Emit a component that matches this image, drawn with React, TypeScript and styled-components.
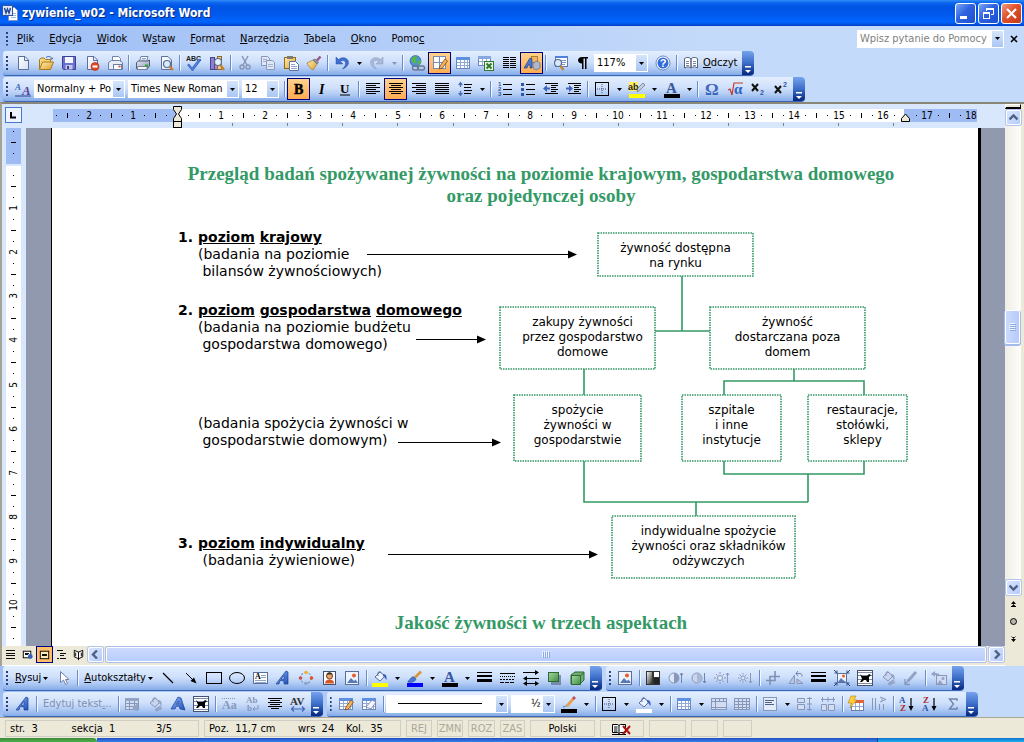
import React, { ReactNode } from "react";
import styled, { createGlobalStyle, css } from "styled-components";

const UI = `"DejaVu Sans Condensed", "DejaVu Sans", sans-serif`;
const GREEN = "#339966";

const Global = createGlobalStyle`
  * { box-sizing: border-box; }
  html, body { margin: 0; padding: 0; height: 100%; }
  body { font-family: ${UI}; font-size: 11px; line-height: 14px; color: #000; background: #ece9d8; overflow: hidden; }
  button, select, input { font: inherit; color: inherit; margin: 0; padding: 0; border: 0; border-radius: 0; background: none; }
  svg { display: block; flex: none; }
`;

/* ---------- icons ---------- */

const ln = (d: string, stroke = "#000", w = 1, extra: object = {}) => (
  <path d={d} fill="none" stroke={stroke} strokeWidth={w} {...extra} />
);

const pageShape = (
  <path d="M3.5 1.5h6.5l3.5 3.5v9.5h-10z" fill="url(#paper)" stroke="#5b6f9c" />
);
const tableShape = (
  <>
    <rect x="1.5" y="2.5" width="13" height="11" fill="#fff" stroke="#6c86bd" />
    <rect x="1" y="2" width="14" height="3" fill="#5f8fe0" />
    {ln("M2 7.5h12M2 10.5h12M5.5 5v8M9.5 5v8M12.5 5v8", "#92aad6")}
  </>
);
const greyTable = (
  <>
    <rect x="1.5" y="2.5" width="13" height="11" fill="#d2ddf2" stroke="#8797ba" />
    <rect x="1" y="2" width="14" height="3" fill="#93a3c5" />
    {ln("M2 7.5h12M2 10.5h12M5.5 5v8M10.5 5v8", "#8797ba")}
  </>
);
const pencil = <path d="M7 14l1-3 5-7 2.5 2-5 7z" fill="#f3b45a" stroke="#7a4a1a" strokeWidth=".8" />;
const lens = (
  <>
    <circle cx="9" cy="9" r="3.5" fill="#d6ecfb" stroke="#5a6c90" strokeWidth="1.2" />
    {ln("M11.5 11.5l3.5 3.5", "#c9802a", 2.2)}
  </>
);
const bucket = (grey: boolean) => (
  <>
    <path d="M3 7l5-5 5 4-5 5z" fill={grey ? "#c9d5ec" : "#eef4ff"} stroke={grey ? "#8797ba" : "#5a6f9f"} />
    <path d="M11 4c3 0 4 2 3.5 6-1.5-2-2-3-3.5-4z" fill={grey ? "#93a3c5" : "#3b62b5"} />
    {ln("M6 6c-1-4 2-6 3-3", grey ? "#8797ba" : "#5a6f9f")}
  </>
);
const picture = (
  <>
    <rect x="1.5" y="1.5" width="13" height="13" fill="#eef4fd" stroke="#5b6f9c" />
    <circle cx="10" cy="5.5" r="2" fill="#e8602c" />
    <path d="M3 13l4-5 3 3 1.5-1.5L14 13z" fill="#5578b8" />
  </>
);
const wordArt = (
  <path d="M1 14L11 1l2 1v12h-4v-3l-4-.5L4 14zM6 9l3 .3V5.500z" fill="url(#blueA)" stroke="#1d4196" strokeWidth=".7" fillRule="evenodd" />
);
const dogWrap = (
  <>
    <rect x=".5" y=".5" width="15" height="15" fill="#fff" stroke="#44516f" />
    {ln("M1 2.5h14M1 5.5h14M1 9.5h14M1 13.5h14", "#7f8aa5")}
    <path d="M3 4l2 2h5l2-2 2 1-2 2v5h-2l-1-2H7l-2 2H3l2-3z" fill="#000" />
  </>
);
const bars = (d: string) => ln(d, "#000", 1, { shapeRendering: "crispEdges" });
const underbar = (fill: string) => <rect x="0" y="13" width="16" height="4" fill={fill} />;
const letter = (t: string, x: number, y: number, size: number, fill: string, more: object = {}) => (
  <text x={x} y={y} fontSize={size} fill={fill} fontFamily='"Liberation Serif", serif' fontWeight="bold" {...more}>{t}</text>
);

const ICONS: Record<string, ReactNode> = {
  word: (
    <>
      <path d="M6.5 2.5h6l3 3v10h-9z" fill="#fff" stroke="#7d94c6" />
      {ln("M9 8.5h5M9 10.5h5M9 12.5h5", "#9fb2d8")}
      <rect x=".5" y=".5" width="10" height="10" fill="#dfe9fb" stroke="#33549e" />
      {ln("M2.5 3l1.5 5 1.5-4L7 8l1.5-5", "#24458f", 1.4)}
    </>
  ),
  new: (<>{pageShape}{ln("M9.5 2v3.5H13", "#5b6f9c")}</>),
  open: (
    <>
      <path d="M1.5 14V4.5l1.5-1.5h3l1.5 1.5h5V7" fill="#f6d679" stroke="#a97a1c" />
      <path d="M1.5 14.5L4.5 7h11l-3 7.500z" fill="url(#gold)" stroke="#a97a1c" />
      {ln("M8 2.5c3-2 5-1 6 1.5M12.5 3.5L14 4.5l.8-2", "#4e6fae")}
    </>
  ),
  save: (
    <>
      <path d="M1.5 1.5h13v13h-12l-1-1z" fill="#6c6fce" stroke="#3b3f94" />
      <rect x="4" y="2" width="8" height="6" fill="#f3f6ff" />
      <rect x="4.5" y="10" width="7" height="4.5" fill="#c5c8e8" />
      <rect x="6" y="11" width="2" height="3" fill="#3b3f94" />
    </>
  ),
  perm: (<>{pageShape}{ln("M9.5 2v3.5H13", "#5b6f9c")}<circle cx="11" cy="11.5" r="4" fill="#dd4a26" stroke="#a8290f" strokeWidth=".6" /><rect x="8.5" y="10.5" width="5" height="2" fill="#fff" /></>),
  mail: (
    <>
      <path d="M5.5 7V1.5h6l2 2V8" fill="#fff" stroke="#7185ad" />
      <path d="M1.5 7.5l3-2h8l3 2v7h-14z" fill="#e7ecf7" stroke="#6c7fa8" />
      <rect x="6.5" y="9.5" width="8" height="5" fill="#fff" stroke="#6c7fa8" />
      <rect x="11.5" y="10.5" width="2" height="2" fill="#e05a2b" />
    </>
  ),
  print: (
    <>
      <path d="M4.5 6.5l1.5-5h7l-1.5 5z" fill="#fff" stroke="#6c7fa8" />
      {ln("M7 3.5h4M6.5 5h4", "#8fa3cb")}
      <path d="M1.5 7.5l2-1.5h9l2-1v6l-2 2.5h-11z" fill="url(#steel)" stroke="#4d5a78" />
      <path d="M3 11.5h9v3H2z" fill="#f5f7fc" stroke="#4d5a78" strokeWidth=".7" />
      <rect x="10" y="9.5" width="3" height="2" fill="#29a829" />
    </>
  ),
  preview: (<>{pageShape}{lens}</>),
  spell: (
    <>
      <text x="0" y="6" fontSize="7" fill="#222" fontFamily='"Liberation Sans", sans-serif' fontWeight="bold">ABC</text>
      <path d="M3 9l3 4L13 4l2 1-8.5 11L1.5 10z" fill="#4a7fe0" stroke="#2452b0" strokeWidth=".6" />
    </>
  ),
  research: (
    <>
      <rect x="1.5" y="2.5" width="4" height="12" fill="#8a7fd0" stroke="#4d438f" />
      <rect x="5.5" y="4.5" width="3" height="10" fill="#b08ad8" stroke="#4d438f" />
      <rect x="8.5" y="1.5" width="4" height="13" fill="#e6c98a" stroke="#8d6a2c" />
      <circle cx="9" cy="7" r="3.5" fill="#e4f2fc" stroke="#5a6c90" strokeWidth="1.2" />
      {ln("M11.5 10l3.5 5", "#c9802a", 2.2)}
    </>
  ),
  cut: (<>{ln("M5 1l5 9M11 1L6 10", "#8797ba", 1.5)}<circle cx="5" cy="12" r="2" fill="none" stroke="#8797ba" strokeWidth="1.5" /><circle cx="11" cy="12" r="2" fill="none" stroke="#8797ba" strokeWidth="1.5" /></>),
  copy: (
    <>
      <path d="M1.5 1.5h6l2 2v7h-8z" fill="#dfe7f6" stroke="#8797ba" />
      <path d="M6.5 5.5h6l2 2v7h-8z" fill="#dfe7f6" stroke="#8797ba" />
      {ln("M3 4.5h4M3 6.5h3M8 9.5h5M8 11.5h5", "#a3b1cf")}
    </>
  ),
  paste: (
    <>
      <rect x="1.5" y="2.5" width="11" height="11" fill="url(#gold)" stroke="#93691c" />
      <rect x="4" y="1" width="6" height="3" fill="#7e7a70" />
      <path d="M6.5 6.5h6l3 3v6h-9z" fill="#fff" stroke="#5b6f9c" />
      {ln("M8 9.5h4M8 11.5h6M8 13.5h6", "#8fa3cb")}
    </>
  ),
  brush: (
    <>
      <path d="M1 8l6-3 4 4-4 6c-2-1-5-4-6-7z" fill="url(#gold)" stroke="#a5812f" strokeWidth=".8" />
      <path d="M7 5l2-1 3.5 3L11 9z" fill="#8d93a8" stroke="#565d76" strokeWidth=".6" />
      {ln("M11 5.5l3.5-4", "#9a5b86", 2.5)}
    </>
  ),
  undo: <path d="M2 2v7h7L6.5 6.5C9 4.5 12 5.5 11.5 9c-.3 2-1.5 3.5-3 5C12 13 14.5 10 14.5 7.5 14.5 3 8.5 1 4.5 4.5z" fill="#3f6fd0" stroke="#2450a5" strokeWidth=".5" />,
  redo: <path d="M14 2v7H7l2.5-2.5C7 4.5 4 5.5 4.5 9c.3 2 1.5 3.5 3 5C4 13 1.5 10 1.5 7.5 1.5 3 7.5 1 11.5 4.5z" fill="#a9b9da" stroke="#8797ba" strokeWidth=".5" />,
  link: (
    <>
      <circle cx="6.5" cy="6" r="5.5" fill="#4f8fdc" stroke="#27508f" strokeWidth=".6" />
      <path d="M2 4c2-3 5-3.500 6-2s-2 2-1 4-2 3-3 2zM8 6l3.500-1 .5 3-2.500 2.500z" fill="#54b848" />
      <rect x="3.500" y="11" width="6" height="4" rx="2" fill="none" stroke="#6d7894" strokeWidth="1.4" />
      <rect x="8.500" y="11" width="7" height="4" rx="2" fill="none" stroke="#6d7894" strokeWidth="1.4" />
    </>
  ),
  tableDraw: (<><rect x="1.5" y="1.5" width="12" height="12" fill="#fff" stroke="#7c8cb0" />{ln("M7.5 2v11M2 7.5h11", "#7c8cb0")}{pencil}</>),
  table: tableShape,
  excel: (
    <>
      <rect x=".5" y="1.5" width="12" height="9" fill="#fff" stroke="#6c86bd" />
      <rect x="0" y="1" width="13" height="3" fill="#8aa8e0" />
      {ln("M1 6.5h11M4.5 4v6M8.5 4v6", "#92aad6")}
      <rect x="6.5" y="6.5" width="9" height="9" fill="#e9f5e4" stroke="#2e7a2e" />
      {ln("M8.5 8.5l5 5M13.5 8.5l-5 5", "#2e7a2e", 2)}
    </>
  ),
  columns: bars("M2 2.5h5.5M2 4.5h5.5M2 6.5h5.5M2 8.5h5.5M2 10.5h5.5M2 12.5h5.5M9 2.5h6M9 4.5h6M9 6.5h6M9 8.5h6M9 10.5h6M9 12.5h6"),
  drawing: (
    <>
      <rect x="7.5" y="1.5" width="6" height="6" fill="#f0b860" stroke="#94631a" strokeWidth=".7" />
      <path d="M9 8l4-2 3 2v5l-4 2-3-2z" fill="#aeb7cc" stroke="#5d6883" strokeWidth=".7" />
      <path d="M0 13L6 3l2 1v9H6v-3H4l-1 3z" fill="#4f78d4" stroke="#213f8d" strokeWidth=".7" />
    </>
  ),
  docmap: (
    <>
      <rect x="3.5" y="1.5" width="12" height="10" fill="#fff" stroke="#5b78b4" />
      <rect x="3" y="1" width="13" height="2" fill="#4f82d8" />
      {ln("M9 5.5h5M9 7.5h5M9 9.5h4", "#7e96c6")}
      <circle cx="6" cy="8" r="3.5" fill="#d6ecfb" stroke="#5a6c90" strokeWidth="1.2" />
      {ln("M8.5 11l3 4", "#c9802a", 2.2)}
    </>
  ),
  para: <path d="M13 2v1.500h-1.500V14H10V3.500H8.500V14H7V8.500C4.500 8.500 3 7 3 5.250S4.500 2 7 2z" fill="#000" />,
  help: (
    <>
      <circle cx="8" cy="8" r="7" fill="#fff" stroke="#4b6cb0" strokeWidth=".8" />
      <circle cx="8" cy="8" r="5.5" fill="#2f6bdc" />
      <text x="8" y="12" fontSize="11" fontWeight="bold" textAnchor="middle" fill="#fff" fontFamily='"Liberation Sans", sans-serif'>?</text>
    </>
  ),
  read: (
    <>
      <path d="M1.5 3.5C4 2 6 2 8 4v9c-2-1.5-4-1.5-6.500 0zM14.5 3.5C12 2 10 2 8 4v9c2-1.5 4-1.5 6.500 0z" fill="#fff" stroke="#56617c" />
      {ln("M3 6.5h3M3 8.5h3M3 10.5h3M10 6.5h3M10 8.5h3M10 10.5h3", "#7a86a2")}
    </>
  ),
  styles: (<>{letter("A", 0, 9, 9, "#3a66c0", { fontStyle: "italic" })}{letter("A", 7, 14, 13, "#5a3fa0", { fontStyle: "italic" })}{ln("M0 15h16", "#24458f")}</>),
  bold: letter("B", 3, 13, 14, "#000", { stroke: "#000", strokeWidth: ".5" }),
  italic: letter("I", 5, 13, 14, "#000", { fontStyle: "italic" }),
  underline: (<>{letter("U", 3, 12, 13, "#000")}{ln("M3 14h10", "#000")}</>),
  alignL: bars("M1 2.5h14M1 4.5h10M1 6.5h14M1 8.5h10M1 10.5h14M1 12.5h10"),
  alignC: bars("M1 2.5h14M3 4.5h10M1 6.5h14M3 8.5h10M1 10.5h14M3 12.5h10"),
  alignR: bars("M1 2.5h14M5 4.5h10M1 6.5h14M5 8.5h10M1 10.5h14M5 12.5h10"),
  justify: bars("M1 2.5h14M1 4.5h14M1 6.5h14M1 8.5h14M1 10.5h14M1 12.5h14"),
  spacing: (
    <>
      {bars("M7 3.5h8M7 6.5h7M7 9.5h8M7 12.5h7")}
      {ln("M3.5 2v4M3.5 10v4", "#4a6fb8", 1.4)}
      <path d="M1 4l2.5-3.5L6 4zM1 12l2.5 3.5L6 12z" fill="#4a6fb8" />
    </>
  ),
  numbers: (
    <>
      {bars("M6 3.5h9M6 8.5h9M6 13.5h9")}
      <g fontSize="6" fill="#2f55a5" fontFamily='"Liberation Sans", sans-serif' fontWeight="bold"><text x="1" y="5">1</text><text x="1" y="10">2</text><text x="1" y="15">3</text></g>
    </>
  ),
  bullets: (<>{bars("M6 3.5h9M6 8.5h9M6 13.5h9")}<g fill="#2f55a5"><rect x="1" y="2" width="3" height="3" /><rect x="1" y="7" width="3" height="3" /><rect x="1" y="12" width="3" height="3" /></g></>),
  outdent: (<>{bars("M2 2.5h13M8 4.5h7M8 6.5h5M8 8.5h7M8 10.5h5M2 12.5h13")}<path d="M0 7.5L4 4v2.5h3v2H4V11z" fill="#3f66b8" /></>),
  indent: (<>{bars("M2 2.5h13M8 4.5h7M8 6.5h5M8 8.5h7M8 10.5h5M2 12.5h13")}<path d="M7 7.5L3 4v2.5H0v2h3V11z" fill="#3f66b8" /></>),
  borders: (<><rect x="1.5" y="1.5" width="13" height="13" fill="none" stroke="#000" />{ln("M8 3v10M3 8h10", "#44516f", 1, { strokeDasharray: "1 1" })}</>),
  highlight: (
    <>
      <rect x="0" y="1" width="9" height="9" fill="#ffef60" />
      <text x="-1" y="9" fontSize="9" fontWeight="bold" fill="#222" fontFamily='"Liberation Sans", sans-serif'>ab</text>
      <path d="M8 11l1-4 5-5 2 2-5 5z" fill="#c8cfdd" stroke="#5d6883" strokeWidth=".7" />
      {underbar("#ff0")}
    </>
  ),
  fontColor: (<>{letter("A", 2, 12, 15, "#37589f")}{underbar("#000")}</>),
  omega: letter("Ω", 1, 14, 17, "#3f66b8"),
  alpha: (<>{ln("M1 9l2-1 2 6L7 2h9", "#c8392b", 1.2)}{letter("α", 7, 13, 15, "#2f63c4")}</>),
  sub: (<>{ln("M2 3l6 7M8 3l-6 7", "#111", 2)}<text x="10" y="14" fontSize="7" fontWeight="bold" fill="#2f55a5" fontFamily='"Liberation Sans", sans-serif'>2</text></>),
  sup: (<>{ln("M2 5l6 7M8 5l-6 7", "#111", 2)}<text x="10" y="6" fontSize="7" fontWeight="bold" fill="#2f55a5" fontFamily='"Liberation Sans", sans-serif'>2</text></>),
  pointer: <path d="M4.5 1.5v11l3-2.5 2 4.5 2-1-2-4h3.500z" fill="#fff" stroke="#6f83ad" />,
  line: ln("M3 3l10 10", "#000", 1.2),
  arrow: (<>{ln("M3 3l8 8", "#000", 1)}<path d="M13.5 13.5L7.500 11l3.500-3.500z" fill="#000" /></>),
  rect: <rect x=".5" y="2.5" width="15" height="11" fill="none" stroke="#000" />,
  oval: <ellipse cx="8" cy="8" rx="7.5" ry="5.5" fill="none" stroke="#000" />,
  textbox: (
    <>
      <rect x="1.5" y="2.5" width="14" height="11" fill="#fff" stroke="#5b6f9c" />
      {letter("A", 3, 9, 8, "#000")}
      {ln("M9 5.5h5M9 7.5h5M3 10.5h11M3 12.5h11", "#8fa3cb")}
    </>
  ),
  wordArt,
  diagram: (
    <>
      <circle cx="8" cy="8" r="5.5" fill="none" stroke="#55648a" strokeDasharray="2 2" />
      <circle cx="8" cy="2.5" r="1.8" fill="#f0b030" /><circle cx="13.5" cy="8" r="1.8" fill="#e8502c" /><circle cx="8" cy="13.5" r="1.8" fill="#8fa3cb" /><circle cx="2.5" cy="8" r="1.8" fill="#c05040" />
    </>
  ),
  clip: (
    <>
      <rect x="2.5" y="1.5" width="12" height="13" fill="#fdfdfd" stroke="#44516f" />
      <circle cx="8.5" cy="6" r="3" fill="#e9a968" stroke="#7a3a18" />
      <path d="M4 13.5c0-3 2-4 4.500-4s4.500 1 4.500 4z" fill="#d8562a" /><path d="M5.5 4.5c1-3 5-3 6 0z" fill="#333" />
    </>
  ),
  picture,
  fillYellow: (<>{bucket(false)}{underbar("#ff0")}</>),
  fillWhite: (<>{bucket(false)}{underbar("#fff")}</>),
  penBlue: (<><path d="M1 11c2 0 3-5 6-4l2 2c-1 3-5 4-8 3z" fill="#4a78d8" stroke="#24458f" strokeWidth=".6" />{ln("M8 7.5l6-6", "#d8963c", 2.6)}{underbar("#00f")}</>),
  weight: (<g fill="#000"><rect x="0" y="2" width="15" height="1" /><rect x="0" y="5" width="15" height="2" /><rect x="0" y="9" width="15" height="3" /></g>),
  dashes: (<g shapeRendering="crispEdges">{ln("M0 3.5h15", "#000")}{ln("M0 6.5h15", "#000", 1, { strokeDasharray: "1 1" })}{ln("M0 9.5h15", "#000", 1, { strokeDasharray: "2 1" })}{ln("M0 12.5h15", "#000", 1, { strokeDasharray: "4 1" })}</g>),
  arrows: (<>{ln("M0 2.5h13M3 8.5h13M3 13.5h10")}<path d="M16 2.5l-4-2.500v5zM0 8.5L4 6v5zM0 13.500l4-2.500v5zM16 13.500l-4-2.500v5z" fill="#000" /></>),
  shadow: (<><rect x="5" y="5" width="10" height="10" fill="#5c6f8d" opacity=".7" /><rect x="2.5" y="2.5" width="10" height="9" fill="url(#green)" stroke="#2f6a33" /></>),
  cube: (<><path d="M2 5l4-3h9v8l-4 4H2z" fill="#6fae70" stroke="#2f6a33" /><rect x="2.5" y="5.5" width="9" height="9" fill="url(#green)" stroke="#2f6a33" />{ln("M11.5 5.5L15 2.5", "#2f6a33")}</>),
  contrast: (<><rect x="1.5" y="1.5" width="6" height="13" fill="url(#mono)" stroke="#333" /><rect x="8.5" y="1.5" width="6" height="6" fill="#fff" stroke="#333" /><rect x="8.5" y="7.5" width="6" height="7" fill="#222" stroke="#333" /></>),
  moreContrast: (<><circle cx="6" cy="8" r="5" fill="#dfe7f6" stroke="#8797ba" /><path d="M6 3a5 5 0 0 1 0 10z" fill="#8797ba" />{ln("M13.5 3v10M12 5l1.5-2L15 5", "#6f83ad")}</>),
  lessContrast: (<><circle cx="6" cy="8" r="5" fill="#c9d5ec" stroke="#8797ba" /><path d="M6 3a5 5 0 0 1 0 10z" fill="#aab8d6" />{ln("M13.5 3v10M12 11l1.5 2 1.5-2", "#6f83ad")}</>),
  moreBright: (<><circle cx="6" cy="8" r="2.5" fill="#dfe7f6" stroke="#8797ba" />{ln("M6 2v2M6 12v2M0 8h2M10 8h2M2 4l1.5 1.5M8.5 10.5L10 12M2 12l1.5-1.5M8.5 5.5L10 4M13.5 3v10M12 5l1.5-2L15 5", "#8797ba")}</>),
  lessBright: (<><circle cx="6" cy="8" r="2" fill="#dfe7f6" stroke="#8797ba" />{ln("M6 3v1.5M6 11.5V13M1 8h1.5M9.5 8H11M2.5 4.5L4 6M8 10l1.5 1.5M2.5 11.5L4 10M8 6l1.5-1.5M13.5 3v10M12 11l1.5 2 1.5-2", "#8797ba")}</>),
  crop: ln("M1 10.5h9V1M5 15V6.5h10", "#7f90b5", 1.6),
  rotate: (<><path d="M1 13.5L6.5 5v8.500zM9 13.500V9l6 4.500z" fill="#b9c6e0" stroke="#8797ba" />{ln("M8 3.5h4c2 0 2 2 2 3M10 1L8 3.5 10 6", "#6f83ad")}</>),
  compress: (<><rect x="3.5" y="3.5" width="9" height="9" fill="#eef4fd" stroke="#5b6f9c" /><circle cx="9.5" cy="6" r="1.5" fill="#e8602c" /><path d="M4 12l3-4 2 2 3 2z" fill="#5578b8" />{ln("M0 0l3 3M16 0l-3 3M0 16l3-3M16 16l-3-3M3 .5V3H.5M13 .5V3h2.5M3 15.5V13H.5M13 15.5V13h2.5", "#24458f")}</>),
  dogWrap,
  formatObj: (<>{bucket(true)}{ln("M8 14l6-4M9 15l6-3", "#93a3c5", 1.6)}</>),
  transparent: (<>{ln("M5 11l8-9", "#93a3c5", 3)}{ln("M2 15v-6M2 14.5h5M2 14l4-4", "#8797ba", 1.3)}</>),
  reset: (<><rect x="5.5" y="5.5" width="10" height="9" fill="#d2ddf2" stroke="#8797ba" /><circle cx="12" cy="8.5" r="1.5" fill="#93a3c5" /><path d="M6 14l3-4 3 4z" fill="#93a3c5" /><path d="M0 4l4-3v2c3 0 5 1 5 3-2-1-3-1-5-1v2z" fill="#93a3c5" /></>),
  gallery: (<>{greyTable}<path d="M8 14l1-3 5-4v8z" fill="#93a3c5" /></>),
  shapeA: <path d="M1 13L8 1l3 1 4 12-5-1-1-3-3 .5L5 13zM6.5 8L9 7.500 8.200 5z" fill="url(#blueA)" stroke="#1d4196" strokeWidth=".7" fillRule="evenodd" />,
  sameHeight: (<>{letter("Aa", 1, 13, 12, "#8797ba")}{ln("M1 2.5h14", "#8797ba", 1, { strokeDasharray: "1 1" })}</>),
  vertText: (<>{letter("Ab", 2, 7, 9, "#8797ba")}{letter("b", 3, 15, 9, "#8797ba")}{ln("M14 9v4H9M11 11l-2 2 2 2", "#8797ba")}</>),
  alignCThick: bars("M1 2.5h14M3 4.5h10M1 6.5h14M3 8.5h10M1 10.5h14M4 12.5h8"),
  kerning: (<>{letter("AV", 0, 9, 11, "#333")}{ln("M2 13h12M4 10.5L1.5 13 4 15.5M12 10.5l2.5 2.5-2.5 2.5", "#3f66b8", 1.2)}</>),
  drawTable: (<>{tableShape}{pencil}</>),
  eraser: (<>{tableShape}<path d="M5 11l6-7 4 2-5 7z" fill="#f4f6fb" stroke="#6c7fa8" strokeWidth=".8" /></>),
  penBlack: (<>{ln("M2 11c2 0 3-2 5-1", "#5d6883")}{ln("M6 10l7-8", "#e6a050", 2.8)}{ln("M12 3l2-2", "#c0506a", 2.8)}{underbar("#000")}</>),
  merge: (<><rect x=".5" y="2.5" width="15" height="11" fill="#d2ddf2" stroke="#8797ba" />{ln("M1 5.5h14M4.5 3v10M12.5 3v2M8.5 3v2M1 11.5h14", "#8797ba")}</>),
  split: (<><rect x=".5" y="2.5" width="15" height="11" fill="#d2ddf2" stroke="#8797ba" />{ln("M1 5.5h14M1 8.5h14M1 11.5h14M4.5 3v10M8.5 3v10M12.5 3v10", "#8797ba")}</>),
  cellAlign: (<><rect x="1.5" y="1.5" width="13" height="13" fill="#e4ebf8" stroke="#8797ba" />{ln("M3 4.5h9M3 6.5h7M3 8.5h9", "#4d5f8a")}</>),
  distRows: (<><path d="M.5 2.5h7v4h-7zM.5 8.500h7v5h-7z" fill="#d2ddf2" stroke="#8797ba" />{ln("M12.5 1v14M10 2.5h5M10 8h5M10 13.5h5", "#8797ba")}</>),
  distCols: (<><path d="M1.5 8.5h5v6h-5zM8.500 8.500h6v6h-6z" fill="#d2ddf2" stroke="#8797ba" />{ln("M1 3.5h14M2.5 1v5M8 1v5M13.5 1v5", "#8797ba")}</>),
  autoFormat: (<><rect x="3.5" y="4.5" width="12" height="10" fill="#fff" stroke="#6c7fa8" /><rect x="4" y="4" width="12" height="3" fill="#e0653a" />{ln("M4 10.5h11M7.5 7v7M11.5 7v7", "#92aad6")}<path d="M3 0h5L6 4h3l-7 8 1.5-5H0z" fill="#ffcf3d" stroke="#b8821a" strokeWidth=".6" /></>),
  textDir: (<>{ln("M1.5 2v12M4.5 2v12M8.5 8v6M12.5 8v6", "#8797ba")}{ln("M9 1l6 2.5L9 6M11 2v3", "#8797ba")}</>),
  sortAZ: (<>{letter("A", 0, 7, 9, "#2f55a5")}{letter("Z", 1, 15, 9, "#b02a2a")}{ln("M12 2v11", "#000", 1.2)}<path d="M9.500 10h5L12 15z" fill="#000" /></>),
  sortZA: (<>{letter("Z", 1, 7, 9, "#b02a2a")}{letter("A", 0, 15, 9, "#2f55a5")}{ln("M12 2v11", "#000", 1.2)}<path d="M9.500 10h5L12 15z" fill="#000" /></>),
  sum: ln("M12 5V3H4.500L8.500 8l-4 5H12v-2", "#6f83ad", 1.4),
  viewNormal: bars("M3 3.5h10M3 6.5h10M3 9.5h10M3 12.5h10"),
  viewWeb: (<><rect x="3.5" y="4.5" width="8" height="7" fill="#fff" stroke="#000" />{bars("M5 6.5h5M5 8.5h3")}<circle cx="11" cy="10" r="2.5" fill="#3560b8" /></>),
  viewPrint: (<><rect x="3.5" y="4.5" width="9" height="8" fill="#ffe9b8" stroke="#000" />{bars("M5 7.5h6M5 9.5h6")}</>),
  viewOutline: bars("M3 3.5h7M6 6.5h2M9 6.5h4M6 9.5h2M9 9.5h2M3 12.5h2M6 12.5h7"),
  viewRead: (<><path d="M3.5 3.5l4.5 2 4.5-2v7l-4.5 2-4.500-2z" fill="#fff" stroke="#000" />{ln("M8 5v9M5 6v4M11 6v4")}</>),
  proof: (
    <>
      <path d="M-1.500 3.500h5l1.500 1 1.500-1h5v8h-5l-1.500 1-1.500-1h-5z" fill="#fff" stroke="#000" />
      {ln("M5 4.5v8M0 6h3.500M0 8h3.500M0 10h3.500M-2 13.500h14")}
      {ln("M9 5l7 8M16 5l-7 8", "#b01010", 2)}
    </>
  ),
};

const Icon = ({ name, size = 16 }: { name: string; size?: number }) => (
  <svg width={size} height={size} viewBox="0 0 16 16" overflow="visible" aria-hidden="true">{ICONS[name]}</svg>
);

const grad = (id: string, a: string, b: string) => (
  <linearGradient id={id} x1="0" y1="0" x2="1" y2="1"><stop offset="0" stopColor={a} /><stop offset="1" stopColor={b} /></linearGradient>
);
const PaintDefs = styled.svg`position: absolute;`;
const Paints = () => (
  <PaintDefs width="0" height="0" aria-hidden="true">
    <defs>
      {grad("paper", "#ffffff", "#d5e0f5")}
      {grad("gold", "#fff0b0", "#dd9c2c")}
      {grad("steel", "#e8ecf5", "#8f9ab5")}
      {grad("blueA", "#8db8ff", "#1f4fb4")}
      {grad("green", "#a8d8a0", "#3c8c44")}
      {grad("mono", "#ffffff", "#222222")}
    </defs>
  </PaintDefs>
);

/* ---------- window frame ---------- */

const Window = styled.div`display: flex; flex-direction: column; height: 100vh; overflow: hidden;`;

const TitleBar = styled.header`
  flex: none; display: flex; align-items: center; height: 26px; padding: 0 2px; gap: 4px;
  background: linear-gradient(#2f8bf8 0, #0a63ee 3px, #0054e3 7px, #0059ee 15px, #0066ff 22px, #003fc4 26px);
`;
const TitleText = styled.h1`
  flex: 1; margin: 0; color: #fff; font: bold 12px/16px ${UI}; text-shadow: 1px 1px 0 #0a2a80;
`;
const WindowButtons = styled.div`display: flex; gap: 2px;`;
const WindowButton = styled.button<{ $close?: boolean }>`
  width: 21px; height: 21px; border: 1px solid #fff; border-radius: 3px; display: grid; place-items: center;
  background: ${(p) => (p.$close ? "linear-gradient(135deg, #f09a7c, #e0502b 45%, #c23a14)" : "linear-gradient(135deg, #7ba6f5, #2d62e0 45%, #1c4fd0)")};
`;

const barTint = "linear-gradient(90deg, #9ebef5, #c4dafa 70%)";
const MenuBar = styled.nav`
  flex: none; display: flex; align-items: center; height: 25px; padding: 0 4px 0 3px; background: ${barTint};
`;
const MenuItem = styled.button`height: 20px; padding: 0 8px 0 7px; white-space: nowrap; &:first-of-type { padding-left: 6px; }`;
const Spacer = styled.span`flex: 1;`;
const AskBox = styled.div`display: flex; width: 147px; height: 18px; background: #fff; padding: 1px;`;
const AskInput = styled.input`flex: 1; min-width: 0; padding: 0 2px; outline: 0; &::placeholder { color: #808080; opacity: 1; }`;
const CloseDoc = styled.button`width: 12px; height: 16px; margin-left: 4px; display: grid; place-items: center;`;

const Grip = styled.span`
  flex: none; width: 3px; height: 14px; margin: 0 2px 0 3px;
  background: repeating-linear-gradient(#27417f 0 2px, transparent 2px 4px); clip-path: inset(0 1px 0 0);
`;

/* ---------- toolbars ---------- */

const ToolbarArea = styled.section`flex: none; display: flex; flex-direction: column; gap: 1px; padding-left: 3px; background: ${barTint};`;
const ToolbarLine = styled.div`display: flex; gap: 4px;`;
const Bar = styled.div`
  display: flex; align-items: center; height: 25px; border-radius: 3px 4px 4px 3px; overflow: hidden;
  border-bottom: 1px solid #3b66b4;
  background: linear-gradient(#e3eefe 0, #cfe0fb 45%, #b4cdf5 70%, #84abe8 100%);
`;
const OverflowButton = styled.button`
  align-self: stretch; width: 12px; display: flex; align-items: flex-end; justify-content: center; padding-bottom: 1px; margin-left: 1px;
  background: linear-gradient(#76a3ee, #3c6dc8 50%, #05267f);
`;
const ToolButton = styled.button<{ $on?: boolean; $narrow?: boolean }>`
  flex: none; width: ${(p) => (p.$narrow ? 12 : 23)}px; height: 22px; display: grid; place-items: center;
  ${(p) => p.$on && css`border: 1px solid #000080; background: linear-gradient(#ffd28c, #ffac52);`}
`;
const TextButton = styled.button<{ $off?: boolean; $tight?: boolean }>`
  display: flex; align-items: center; gap: ${(p) => (p.$tight ? 2 : 4)}px; height: 22px; padding: 0 4px; white-space: nowrap;
  color: ${(p) => (p.$off ? "#7f8fb2" : "#000")};
`;
const Sep = styled.span`flex: none; width: 1px; height: 16px; margin: 0 2px; background: #6a8ccb; box-shadow: 1px 0 0 #f1f7ff;`;

const Combo = styled.span<{ $w: number }>`
  position: relative; flex: none; display: flex; width: ${(p) => p.$w}px; height: 18px; margin-right: 3px; background: #fff; padding: 1px;
`;
const ComboSelect = styled.select<{ $end?: boolean }>`
  flex: 1; min-width: 0; appearance: none; padding: 0 2px; white-space: nowrap; overflow: hidden; text-overflow: clip; outline: 0;
  text-align: ${(p) => (p.$end ? "right" : "left")};
`;
const ComboArrow = styled.span`flex: none; width: 11px; height: 16px; display: grid; place-items: center; background: linear-gradient(#d6e5fc, #a9c6f3); pointer-events: none;`;
const LineSample = styled.span`position: absolute; left: 12px; right: 26px; top: 8px; height: 1px; background: #000; pointer-events: none;`;

const Down = ({ color = "#000" }: { color?: string }) => (
  <svg width="5" height="3" viewBox="0 0 5 3" aria-hidden="true"><path d="M0 0h5L2.5 3z" fill={color} /></svg>
);
const Tool = ({ i, t, on, menu, off }: { i: string; t: string; on?: boolean; menu?: boolean; off?: boolean }) => (
  <>
    <ToolButton $on={on} aria-label={t}><Icon name={i} /></ToolButton>
    {menu && <ToolButton $narrow aria-label={`${t}: opcje`}><Down color={off ? "#8797ba" : "#000"} /></ToolButton>}
  </>
);
const Toolbar = ({ label, children }: { label: string; children: ReactNode }) => (
  <Bar role="toolbar" aria-label={label}>
    <Grip />
    {children}
    <OverflowButton aria-label="Opcje paska narzędzi">
      <svg width="7" height="8" viewBox="0 0 7 8" aria-hidden="true"><path d="M0 0h6v1.5H0zM0 4h6L3 7z" fill="#fff" /></svg>
    </OverflowButton>
  </Bar>
);
const Select = ({ label, value, w, end, line }: { label: string; value: string; w: number; end?: boolean; line?: boolean }) => (
  <Combo $w={w}>
    <ComboSelect aria-label={label} $end={end}><option>{value}</option></ComboSelect>
    {line && <LineSample />}
    <ComboArrow><Down /></ComboArrow>
  </Combo>
);

/* ---------- rulers ---------- */

const CM = 44.1;
const Workspace = styled.main`
  flex: 1; min-height: 0; display: flex; background: #ece9d8; border-top: 2px solid #8a8778; border-left: 2px solid #a5a395;
`;
const WorkColumn = styled.div`flex: 1; min-width: 0; display: flex; flex-direction: column;`;
const TopRuler = styled.div`flex: none; display: flex; align-items: flex-start; height: 24px; padding-left: 3px; background: #d8e7fc;`;
const TabStop = styled.button`
  flex: none; width: 17px; height: 16px; margin-top: 3px; border: 1px solid #4a78d0; background: #eef4fe; display: grid; place-items: center;
`;
const RulerScale = styled.svg`margin-left: 29px; font-family: ${UI}; font-size: 10px;`;
const SideRuler = styled.div`flex: none; width: 24px; padding-left: 4px; background: #d8e7fc; overflow: hidden;`;
const SideScale = styled.svg`font-family: ${UI}; font-size: 10px;`;

const HorizontalScale = () => {
  const zero = 126;
  const marks: ReactNode[] = [];
  for (let q = -11; q <= 72; q++) {
    const x = Math.round(zero + (q * CM) / 4);
    if (q === 0 || q === 66) continue;
    if (q % 4 === 0) marks.push(<text key={q} x={x} y="15" textAnchor="middle">{Math.abs(q / 4)}</text>);
    else if (q % 2 === 0) marks.push(<rect key={q} x={x} y="9" width="1" height="5" />);
    else marks.push(<rect key={q} x={x} y="11" width="1" height="1" />);
  }
  const tabs = Array.from({ length: 13 }, (_, n) => <rect key={n} x={Math.round(zero + (n + 1) * 55.1)} y="19" width="1" height="3" fill="#808080" />);
  return (
    <RulerScale width="930" height="24" viewBox="0 0 930 24" aria-label="Linijka pozioma">
      <rect x="2" y="5" width="924" height="13" fill="#9ebcf3" />
      <rect x="126" y="5" width="727" height="13" fill="#fff" />
      {marks}
      {tabs}
      <path d="M122.5 2.5h8v3l-3 4.5 3 4.5v3h-8v-3l3-4.5-3-4.500z" fill="#ece9d8" stroke="#000" />
      <rect x="122.5" y="17.5" width="8" height="6" fill="#ece9d8" stroke="#000" />
      <path d="M850.5 17.5v-3l4-4.5 4 4.500v3z" fill="#ece9d8" stroke="#000" />
    </RulerScale>
  );
};
const VerticalScale = () => {
  const zero = 36;
  const marks: ReactNode[] = [];
  for (let q = -3; q <= 43; q++) {
    const y = Math.round(zero + (q * CM) / 4);
    if (q === 0) continue;
    if (q % 4 === 0) marks.push(<text key={q} transform={`translate(11 ${y}) rotate(-90)`} textAnchor="middle">{q / 4}</text>);
    else if (q % 2 === 0) marks.push(<rect key={q} x="5" y={y} width="5" height="1" />);
    else marks.push(<rect key={q} x="7" y={y} width="1" height="1" />);
  }
  return (
    <SideScale width="15" height="530" viewBox="0 0 15 530" aria-label="Linijka pionowa">
      <rect width="15" height="36" fill="#9ebcf3" />
      <rect y="38" width="15" height="492" fill="#fff" />
      {marks}
    </SideScale>
  );
};

/* ---------- document ---------- */

const Desk = styled.div`flex: 1; min-height: 0; display: flex; background: #9099ae;`;
const Page = styled.article`
  flex: 1; min-width: 0; margin: 0 24px 0 25px; padding: 35px 73px 0 125px; overflow: hidden;
  background: #fff; border-left: 1px solid #000; border-right: 3px solid #000;
`;
const DeskGap = styled.div`flex: 1; min-width: 0; display: flex; overflow: hidden;`;
const Heading = styled.h2`
  margin: 0; text-align: center; color: ${GREEN}; font: bold 19px/22px "Liberation Serif", serif;
`;
const Figure = styled.section`position: relative; margin: 22px 0 43px;`;
const Notes = styled.div`display: flex; flex-direction: column; font: 14px/17px "DejaVu Sans", sans-serif;`;
const Note = styled.div<{ $before?: number }>`
  display: grid; grid-template-columns: 20px 1fr; margin-top: ${(p) => p.$before ?? 0}px; padding-left: 1px; white-space: pre;
`;
const NoteTitle = styled.h3`margin: 0; font: bold 14px/17px "DejaVu Sans", sans-serif;`;
const NoteText = styled.p`margin: 0; grid-column: 2;`;
const Connectors = styled.svg`position: absolute; left: 0; top: 0;`;
const Node = styled.div<{ $x: number; $y: number; $w: number; $indent?: boolean }>`
  position: absolute; left: ${(p) => p.$x}px; top: ${(p) => p.$y}px; width: ${(p) => p.$w}px;
  padding: 8px 0 0 ${(p) => (p.$indent ? 10 : 0)}px; text-align: center; white-space: pre;
  font: 12px/15px "DejaVu Sans", sans-serif;
`;

type Box = { x: number; y: number; w: number; h: number; text: string; indent?: boolean };
const BOXES: Box[] = [
  { x: 421, y: 4, w: 155, h: 43, text: "żywność dostępna\nna rynku" },
  { x: 323, y: 78, w: 155, h: 62, text: "zakupy żywności\nprzez gospodarstwo\ndomowe", indent: true },
  { x: 533, y: 78, w: 155, h: 62, text: "żywność\ndostarczana poza\ndomem" },
  { x: 337, y: 166, w: 127, h: 66, text: "spożycie\nżywności w\ngospodarstwie" },
  { x: 505, y: 166, w: 99, h: 66, text: "szpitale\ni inne\ninstytucje" },
  { x: 631, y: 166, w: 99, h: 66, text: "restauracje,\nstołówki,\nsklepy", indent: true },
  { x: 435, y: 287, w: 183, h: 62, text: "indywidualne spożycie\nżywności oraz składników\nodżywczych", indent: true },
];
const ARROWS = [[190, 400, 25], [239, 309, 110], [221, 324, 213], [211, 421, 325]];

const LevelDiagram = () => (
  <Figure>
    <Notes>
      <Note>
        <NoteTitle>1.</NoteTitle><NoteTitle><u>poziom</u> <u>krajowy</u></NoteTitle>
        <NoteText>{"(badania na poziomie\n bilansów żywnościowych)"}</NoteText>
      </Note>
      <Note $before={22}>
        <NoteTitle>2.</NoteTitle><NoteTitle><u>poziom</u> <u>gospodarstwa</u> <u>domowego</u></NoteTitle>
        <NoteText>{"(badania na poziomie budżetu\n gospodarstwa domowego)"}</NoteText>
      </Note>
      <Note $before={62}><NoteText>{"(badania spożycia żywności w\n gospodarstwie domowym)"}</NoteText></Note>
      <Note $before={86}>
        <NoteTitle>3.</NoteTitle><NoteTitle><u>poziom</u> <u>indywidualny</u></NoteTitle>
        <NoteText>{" (badania żywieniowe)"}</NoteText>
      </Note>
    </Notes>
    <Connectors width="740" height="360" viewBox="0 0 740 360" aria-hidden="true">
      {ARROWS.map(([a, b, y]) => (
        <g key={y}>
          <rect x={a} y={y} width={b - a - 6} height="1" />
          <path d={`M${b} ${y + 0.5}l-9-4v8z`} />
        </g>
      ))}
      <path
        d="M505 47V102M478 102H533M407 140V166M617 140V152M547 166V152H687V166M547 232V245H687V232M631 245V273M407 232V273H631M519 273V287"
        fill="none" stroke={GREEN} strokeWidth="1.6"
      />
      {BOXES.map((b) => (
        <rect key={b.text} x={b.x} y={b.y} width={b.w} height={b.h} fill="none" stroke={GREEN} strokeWidth="1.6" strokeDasharray="1.5 1" />
      ))}
    </Connectors>
    {BOXES.map((b) => <Node key={b.text} $x={b.x} $y={b.y} $w={b.w} $indent={b.indent}>{b.text}</Node>)}
  </Figure>
);

/* ---------- scroll bars ---------- */

const ScrollV = styled.div`flex: none; width: 19px; padding: 0 3px 0 0; display: flex; flex-direction: column; align-items: center; background: #ece9d8;`;
const SplitBox = styled.span`width: 16px; height: 5px; flex: none; background: #ece9d8; border: 1px solid #fff; border-right-color: #000; border-bottom: 2px solid #000;`;
const ScrollButton = styled.button`
  flex: none; width: 15px; height: 15px; margin: 1px; border: 1px solid #fff; border-radius: 2px; display: grid; place-items: center;
  background: linear-gradient(135deg, #dbe6fe, #b5cbf8); box-shadow: 0 0 0 1px #b0c4ec;
`;
const TrackV = styled.div`flex: 1; width: 16px; padding-top: 184px; background: linear-gradient(90deg, #efeee6, #fdfdfb);`;
const ThumbV = styled.div`width: 15px; height: 34px; border: 1px solid #fff; border-radius: 2px; display: grid; place-items: center; background: linear-gradient(90deg, #cbdafe, #b6cbf9); box-shadow: 0 1px 0 1px #a4baec;`;
const PageJumps = styled.div`flex: none; height: 70px; display: flex; flex-direction: column; align-items: center; gap: 1px;`;
const JumpButton = styled.button`width: 15px; height: 16px; display: grid; place-items: center;`;

const BottomStrip = styled.div`flex: none; display: flex; align-items: center; height: 20px; padding-bottom: 2px; border-bottom: 1px solid #fff; background: #ece9d8;`;
const ViewButton = styled.button<{ $on?: boolean }>`
  flex: none; width: 17px; height: 17px; display: grid; place-items: center;
  ${(p) => p.$on && css`border: 1px solid #000080; background: #ffbe69;`}
`;
const ThumbH = styled.div`
  flex: 1; height: 15px; margin: 0 2px; border: 1px solid #fff; border-radius: 2px; display: grid; place-items: center;
  background: linear-gradient(#cbdafe, #b9cdfb); box-shadow: 0 0 0 1px #a9bdec;
`;

const chevron = (d: string) => (
  <svg width="9" height="9" viewBox="0 0 9 9" aria-hidden="true"><path d={d} fill="none" stroke="#4d6185" strokeWidth="2.4" /></svg>
);

/* ---------- status bar ---------- */

const Status = styled.footer`flex: none; display: flex; align-items: center; gap: 5px; height: 21px; padding: 1px 5px 0; background: #ece9d8; border-top: 1px solid #aca899;`;
const Cell = styled.span<{ $w: number; $off?: boolean; $split?: boolean }>`
  flex: none; display: flex; align-items: center; justify-content: ${(p) => (p.$split ? "space-between" : "center")};
  width: ${(p) => p.$w}px; height: 17px; padding: 0 ${(p) => (p.$split ? 4 : 0)}px; border: 1px solid #d0cec4; white-space: nowrap;
  color: ${(p) => (p.$off ? "#aca899" : "#000")};
`;
const Pos = styled.span<{ $w: number }>`width: ${(p) => p.$w}px;`;
const Taskbar = styled.div`flex: none; display: flex; height: 4px;`;
const StartEdge = styled.span`width: 97px; background: linear-gradient(#3c8a3a, #4fae4a); border-top-right-radius: 6px;`;
const TaskEdge = styled.span`flex: 1; background: linear-gradient(#1f4fc0, #3a7ef0);`;
const TrayEdge = styled.span`width: 147px; background: linear-gradient(#1270c8, #18b4f4); border-left: 1px solid #0a3f8f;`;

const MENUS: [string, string, string][] = [
  ["", "P", "lik"], ["", "E", "dycja"], ["", "W", "idok"], ["W", "s", "taw"], ["", "F", "ormat"],
  ["", "N", "arzędzia"], ["", "T", "abela"], ["", "O", "kno"], ["Pomo", "c", ""],
];

export default function App() {
  return (
    <Window>
      <Global />
      <Paints />
      <TitleBar>
        <Icon name="word" />
        <TitleText>zywienie_w02 - Microsoft Word</TitleText>
        <WindowButtons>
          <WindowButton aria-label="Minimalizuj"><svg width="13" height="13"><rect x="1" y="9" width="7" height="3" fill="#fff" /></svg></WindowButton>
          <WindowButton aria-label="Przywróć"><svg width="13" height="13" fill="none" stroke="#fff"><path d="M4.5 4V1.5h7v6H9" /><path d="M4 2h8" strokeWidth="2" /><rect x="1.5" y="5.5" width="6" height="6" /><path d="M1 6h7" strokeWidth="2" /></svg></WindowButton>
          <WindowButton $close aria-label="Zamknij"><svg width="13" height="13"><path d="M2 2l9 9M11 2l-9 9" stroke="#fff" strokeWidth="2.2" /></svg></WindowButton>
        </WindowButtons>
      </TitleBar>

      <MenuBar aria-label="Menu">
        <Grip />
        {MENUS.map(([a, u, b]) => <MenuItem key={a + u + b}>{a}<u>{u}</u>{b}</MenuItem>)}
        <Spacer />
        <AskBox>
          <AskInput aria-label="Pytanie do Pomocy" placeholder="Wpisz pytanie do Pomocy" />
          <ComboArrow><Down /></ComboArrow>
        </AskBox>
        <CloseDoc aria-label="Zamknij okno"><svg width="8" height="8"><path d="M1 1l6 6M7 1l-6 6" stroke="#000" strokeWidth="1.6" /></svg></CloseDoc>
      </MenuBar>

      <ToolbarArea>
        <ToolbarLine>
          <Toolbar label="Standardowy">
            <Tool i="new" t="Nowy" /><Tool i="open" t="Otwórz" /><Tool i="save" t="Zapisz" /><Tool i="perm" t="Uprawnienia" /><Tool i="mail" t="Poczta" /><Sep />
            <Tool i="print" t="Drukuj" /><Tool i="preview" t="Podgląd wydruku" /><Sep />
            <Tool i="spell" t="Pisownia" /><Tool i="research" t="Poszukaj" /><Sep />
            <Tool i="cut" t="Wytnij" /><Tool i="copy" t="Kopiuj" /><Tool i="paste" t="Wklej" /><Tool i="brush" t="Malarz formatów" /><Sep />
            <Tool i="undo" t="Cofnij" menu /><Tool i="redo" t="Ponów" menu off /><Sep />
            <Tool i="link" t="Hiperłącze" /><Tool i="tableDraw" t="Tabele i krawędzie" on /><Tool i="table" t="Wstaw tabelę" /><Tool i="excel" t="Wstaw arkusz" /><Tool i="columns" t="Kolumny" /><Tool i="drawing" t="Rysowanie" on /><Sep />
            <Tool i="docmap" t="Plan dokumentu" /><Tool i="para" t="Pokaż wszystko" />
            <Select label="Powiększenie" value="117%" w={54} />
            <Tool i="help" t="Pomoc" /><Sep />
            <TextButton><Icon name="read" /><span><u>O</u>dczyt</span></TextButton>
          </Toolbar>
        </ToolbarLine>
        <ToolbarLine>
          <Toolbar label="Formatowanie">
            <Tool i="styles" t="Style i formatowanie" />
            <Select label="Styl" value="Normalny + Pogrubienie" w={91} /><Select label="Czcionka" value="Times New Roman" w={111} /><Select label="Rozmiar" value="12" w={37} /><Sep />
            <Tool i="bold" t="Pogrubienie" on /><Tool i="italic" t="Kursywa" /><Tool i="underline" t="Podkreślenie" /><Sep />
            <Tool i="alignL" t="Do lewej" /><Tool i="alignC" t="Wyśrodkuj" on /><Tool i="alignR" t="Do prawej" /><Tool i="justify" t="Wyjustuj" /><Tool i="spacing" t="Interlinia" menu /><Sep />
            <Tool i="numbers" t="Numerowanie" /><Tool i="bullets" t="Wypunktowanie" /><Tool i="outdent" t="Zmniejsz wcięcie" /><Tool i="indent" t="Zwiększ wcięcie" /><Sep />
            <Tool i="borders" t="Obramowanie" menu /><Tool i="highlight" t="Wyróżnienie" menu /><Tool i="fontColor" t="Kolor czcionki" menu /><Sep />
            <Tool i="omega" t="Symbol" /><Tool i="alpha" t="Edytor równań" /><Tool i="sub" t="Indeks dolny" /><Tool i="sup" t="Indeks górny" />
          </Toolbar>
        </ToolbarLine>
      </ToolbarArea>

      <Workspace>
        <WorkColumn>
          <TopRuler>
            <TabStop aria-label="Tabulator lewy"><svg width="7" height="7"><path d="M1 0v5.5h5" fill="none" stroke="#000" strokeWidth="2" /></svg></TabStop>
            <HorizontalScale />
          </TopRuler>
          <Desk>
            <SideRuler><VerticalScale /></SideRuler>
            <DeskGap>
              <Page>
                <Heading>Przegląd badań spożywanej żywności na poziomie krajowym, gospodarstwa domowego oraz pojedynczej osoby</Heading>
                <LevelDiagram />
                <Heading>Jakość żywności w trzech aspektach</Heading>
              </Page>
            </DeskGap>
          </Desk>
          <BottomStrip>
            <ViewButton aria-label="Widok normalny"><Icon name="viewNormal" size={15} /></ViewButton>
            <ViewButton aria-label="Układ sieci Web"><Icon name="viewWeb" size={15} /></ViewButton>
            <ViewButton $on aria-label="Układ wydruku"><Icon name="viewPrint" size={15} /></ViewButton>
            <ViewButton aria-label="Konspekt"><Icon name="viewOutline" size={15} /></ViewButton>
            <ViewButton aria-label="Układ do czytania"><Icon name="viewRead" size={15} /></ViewButton>
            <ScrollButton aria-label="Przewiń w lewo">{chevron("M6 .5L2 4.5l4 4")}</ScrollButton>
            <ThumbH><svg width="9" height="7"><path d="M.5 0v6M2.5 0v6M4.5 0v6M6.5 0v6" stroke="#eef4fe" /><path d="M1.5 1v6M3.5 1v6M5.5 1v6M7.5 1v6" stroke="#8caae6" /></svg></ThumbH>
            <ScrollButton aria-label="Przewiń w prawo">{chevron("M3 .5l4 4-4 4")}</ScrollButton>
          </BottomStrip>
        </WorkColumn>
        <ScrollV>
          <SplitBox />
          <ScrollButton aria-label="Przewiń w górę">{chevron("M.5 6.5l4-4 4 4")}</ScrollButton>
          <TrackV><ThumbV><svg width="7" height="8"><path d="M0 .5h6M0 2.5h6M0 4.5h6M0 6.5h6" stroke="#eef4fe" /><path d="M1 1.5h6M1 3.5h6M1 5.5h6M1 7.5h6" stroke="#8caae6" /></svg></ThumbV></TrackV>
          <ScrollButton aria-label="Przewiń w dół">{chevron("M.5 2.5l4 4 4-4")}</ScrollButton>
          <PageJumps>
            <JumpButton aria-label="Poprzednia strona"><svg width="5" height="7"><path d="M0 3l2.5-3L5 3zM0 6l2.5-3L5 6zM0 5h5v1H0z" /></svg></JumpButton>
            <JumpButton aria-label="Wybierz obiekt"><svg width="7" height="7"><circle cx="3.5" cy="3.5" r="3" fill="#b8b8b0" stroke="#000" /></svg></JumpButton>
            <JumpButton aria-label="Następna strona"><svg width="5" height="7"><path d="M0 1h5v1H0zM0 1l2.5 3L5 1zM0 4l2.5 3L5 4z" /></svg></JumpButton>
          </PageJumps>
        </ScrollV>
      </Workspace>

      <ToolbarArea>
        <ToolbarLine>
          <Toolbar label="Rysowanie">
            <TextButton $tight><span><u>R</u>ysuj</span><Down /></TextButton><Tool i="pointer" t="Zaznacz obiekty" /><Sep />
            <TextButton $tight><span><u>A</u>utokształty</span><Down /></TextButton>
            <Tool i="line" t="Linia" /><Tool i="arrow" t="Strzałka" /><Tool i="rect" t="Prostokąt" /><Tool i="oval" t="Elipsa" /><Tool i="textbox" t="Pole tekstowe" /><Tool i="wordArt" t="Wstaw WordArt" /><Tool i="diagram" t="Diagram" /><Tool i="clip" t="Clipart" /><Tool i="picture" t="Obraz" /><Sep />
            <Tool i="fillYellow" t="Kolor wypełnienia" menu /><Tool i="penBlue" t="Kolor linii" menu /><Tool i="fontColor" t="Kolor czcionki" menu />
            <Tool i="weight" t="Styl linii" /><Tool i="dashes" t="Styl kreski" /><Tool i="arrows" t="Styl strzałki" /><Tool i="shadow" t="Cień" /><Tool i="cube" t="Trójwymiarowość" />
          </Toolbar>
          <Toolbar label="Obraz">
            <Tool i="picture" t="Wstaw obraz" /><Sep />
            <Tool i="contrast" t="Kolor" /><Tool i="moreContrast" t="Większy kontrast" /><Tool i="lessContrast" t="Mniejszy kontrast" /><Tool i="moreBright" t="Większa jaskrawość" /><Tool i="lessBright" t="Mniejsza jaskrawość" /><Sep />
            <Tool i="crop" t="Przytnij" /><Tool i="rotate" t="Obróć" /><Tool i="weight" t="Linie" /><Tool i="compress" t="Kompresuj" /><Tool i="dogWrap" t="Zawijanie tekstu" /><Tool i="formatObj" t="Formatuj obraz" /><Tool i="transparent" t="Przezroczystość" /><Sep />
            <Tool i="reset" t="Resetuj obraz" />
          </Toolbar>
        </ToolbarLine>
        <ToolbarLine>
          <Toolbar label="WordArt">
            <Tool i="wordArt" t="Wstaw WordArt" /><Sep />
            <TextButton $off><span>Edytuj tekst<u>.</u>..</span></TextButton><Sep />
            <Tool i="gallery" t="Galeria" /><Tool i="formatObj" t="Formatuj" /><Tool i="shapeA" t="Kształt" /><Tool i="dogWrap" t="Zawijanie" /><Sep />
            <Tool i="sameHeight" t="Litery równej wysokości" /><Tool i="vertText" t="Tekst pionowy" /><Tool i="alignCThick" t="Wyrównanie" /><Tool i="kerning" t="Odstępy" />
          </Toolbar>
          <Toolbar label="Tabele i krawędzie">
            <Tool i="drawTable" t="Rysuj tabelę" /><Tool i="eraser" t="Gumka" /><Sep />
            <Select label="Styl linii" value=" " w={122} line /><Select label="Grubość linii" value="½" w={44} end />
            <Tool i="penBlack" t="Kolor krawędzi" menu /><Sep />
            <Tool i="borders" t="Krawędzie" menu /><Tool i="fillWhite" t="Cieniowanie" menu /><Sep />
            <Tool i="table" t="Wstaw tabelę" menu /><Tool i="merge" t="Scal komórki" /><Tool i="split" t="Podziel komórki" /><Sep />
            <Tool i="cellAlign" t="Wyrównanie komórki" menu /><Tool i="distRows" t="Rozłóż wiersze" /><Tool i="distCols" t="Rozłóż kolumny" /><Sep />
            <Tool i="autoFormat" t="Autoformatowanie" /><Tool i="textDir" t="Kierunek tekstu" /><Sep />
            <Tool i="sortAZ" t="Sortuj rosnąco" /><Tool i="sortZA" t="Sortuj malejąco" /><Tool i="sum" t="Autosumowanie" />
          </Toolbar>
        </ToolbarLine>
      </ToolbarArea>

      <Status>
        <Cell $w={194} $split><Pos $w={61}>str.&nbsp; 3</Pos><Pos $w={84}>sekcja&nbsp; 1</Pos><Pos $w={38}>3/5</Pos></Cell>
        <Cell $w={197} $split><Pos $w={89}>Poz.&nbsp; 11,7 cm</Pos><Pos $w={48}>wrs&nbsp; 24</Pos><Pos $w={50}>Kol.&nbsp; 35</Pos></Cell>
        <Cell $w={26} $off>REJ</Cell><Cell $w={26} $off>ZMN</Cell><Cell $w={27} $off>ROZ</Cell><Cell $w={25} $off>ZAS</Cell>
        <Cell $w={65}>Polski</Cell>
        <Cell $w={44}><Icon name="proof" /></Cell>
        <Cell $w={37} /><Cell $w={27} /><Cell $w={29} />
      </Status>
      <Taskbar><StartEdge /><TaskEdge /><TrayEdge /></Taskbar>
    </Window>
  );
}
